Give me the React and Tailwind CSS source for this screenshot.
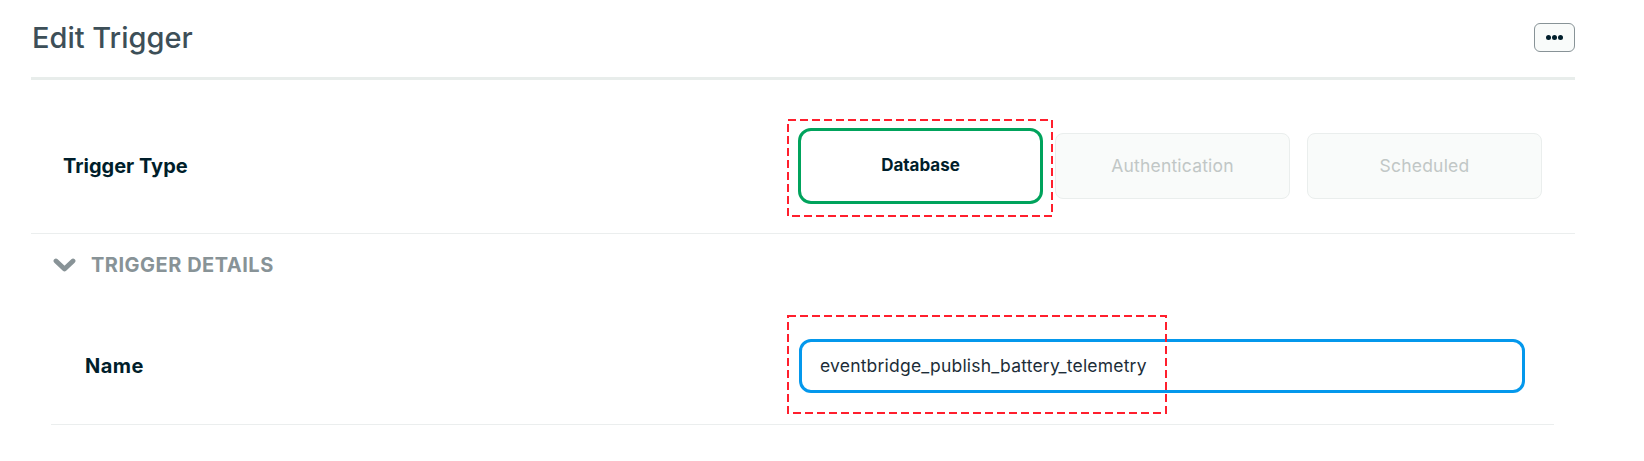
function DashedBox({ className, w, h }) {
  return (
    <svg width={w} height={h} className={className}>
      <rect x="1" y="1" width={w - 2} height={h - 2} fill="none" stroke="#ff1f2d" strokeWidth="2" strokeDasharray="8 4" />
    </svg>
  );
}

export default function App() {
  return (
    <div className="relative flex flex-col w-[1644px] h-[461px] pt-[23px] bg-white text-[#001e2b] font-['Inter',sans-serif]">
      {/* header */}
      <div className="ml-[31px] w-[1544px]">
        <div className="flex items-center justify-between h-[29px] mb-[25px]">
          <h1 className="text-[29px] leading-[29px] font-medium text-[#3d4f58] pl-px">Edit Trigger</h1>
          <button className="flex items-center justify-center gap-[1px] w-[41px] h-[29px] rounded-md border border-[#889397] bg-[#f9fbfa]">
            <span className="size-[5px] rounded-full bg-[#001e2b]" />
            <span className="size-[5px] rounded-full bg-[#001e2b]" />
            <span className="size-[5px] rounded-full bg-[#001e2b]" />
          </button>
        </div>
        <div className="h-[3px] bg-[#e8edeb]" />

        {/* trigger type */}
        <div className="flex items-center pt-[53px] pb-[34px] border-b border-[#ebeeee]">
          <div className="w-[772px] pl-[32px] text-[20px] leading-[20px] font-bold">Trigger Type</div>
          <div className="flex gap-[17px]">
            <button className="w-[235px] h-[66px] rounded-lg bg-white outline-3 outline-[#00a35c] outline-offset-2 text-[17px] font-bold">
              Database
            </button>
            <button className="w-[235px] h-[66px] rounded-lg bg-[#f9fbfa] border border-[#eaeeed] text-[17.5px] tracking-[0.2px] text-[#c1c7c6]">
              Authentication
            </button>
            <button className="w-[235px] h-[66px] rounded-lg bg-[#f9fbfa] border border-[#eaeeed] text-[17.5px] tracking-[0.2px] text-[#c1c7c6]">
              Scheduled
            </button>
          </div>
        </div>
      </div>

      {/* trigger details */}
      <div className="ml-[51px] w-[1503px]">
        <div className="flex items-center gap-[16px] pt-[21px] h-[41px]">
          <svg width="24" height="14" viewBox="0 0 24 14" className="ml-[2px]">
            <path d="M3 3 L11.5 11 L20 3" fill="none" stroke="#889397" strokeWidth="4.8" strokeLinecap="round" strokeLinejoin="round" />
          </svg>
          <span className="text-[20px] leading-[20px] font-bold tracking-[0.5px] text-[#889397] -ml-[2px]">TRIGGER DETAILS</span>
        </div>
        <div className="flex items-center pt-[64px] pb-[31px] border-b border-[#ebeeee]">
          <div className="w-[748px] pl-[34px] text-[20px] leading-[20px] font-bold tracking-[0.5px]">Name</div>
          <div className="flex items-center w-[726px] h-[54px] rounded-xl border-3 border-[#0498ec] pl-[18px] text-[17.5px] tracking-[0.2px] text-[#1c2d38]">
            eventbridge_publish_battery_telemetry
          </div>
        </div>
      </div>

      {/* annotation boxes */}
      <DashedBox className="absolute left-[787px] top-[119px]" w={266} h={98} />
      <DashedBox className="absolute left-[787px] top-[315px]" w={380} h={99} />
    </div>
  );
}
